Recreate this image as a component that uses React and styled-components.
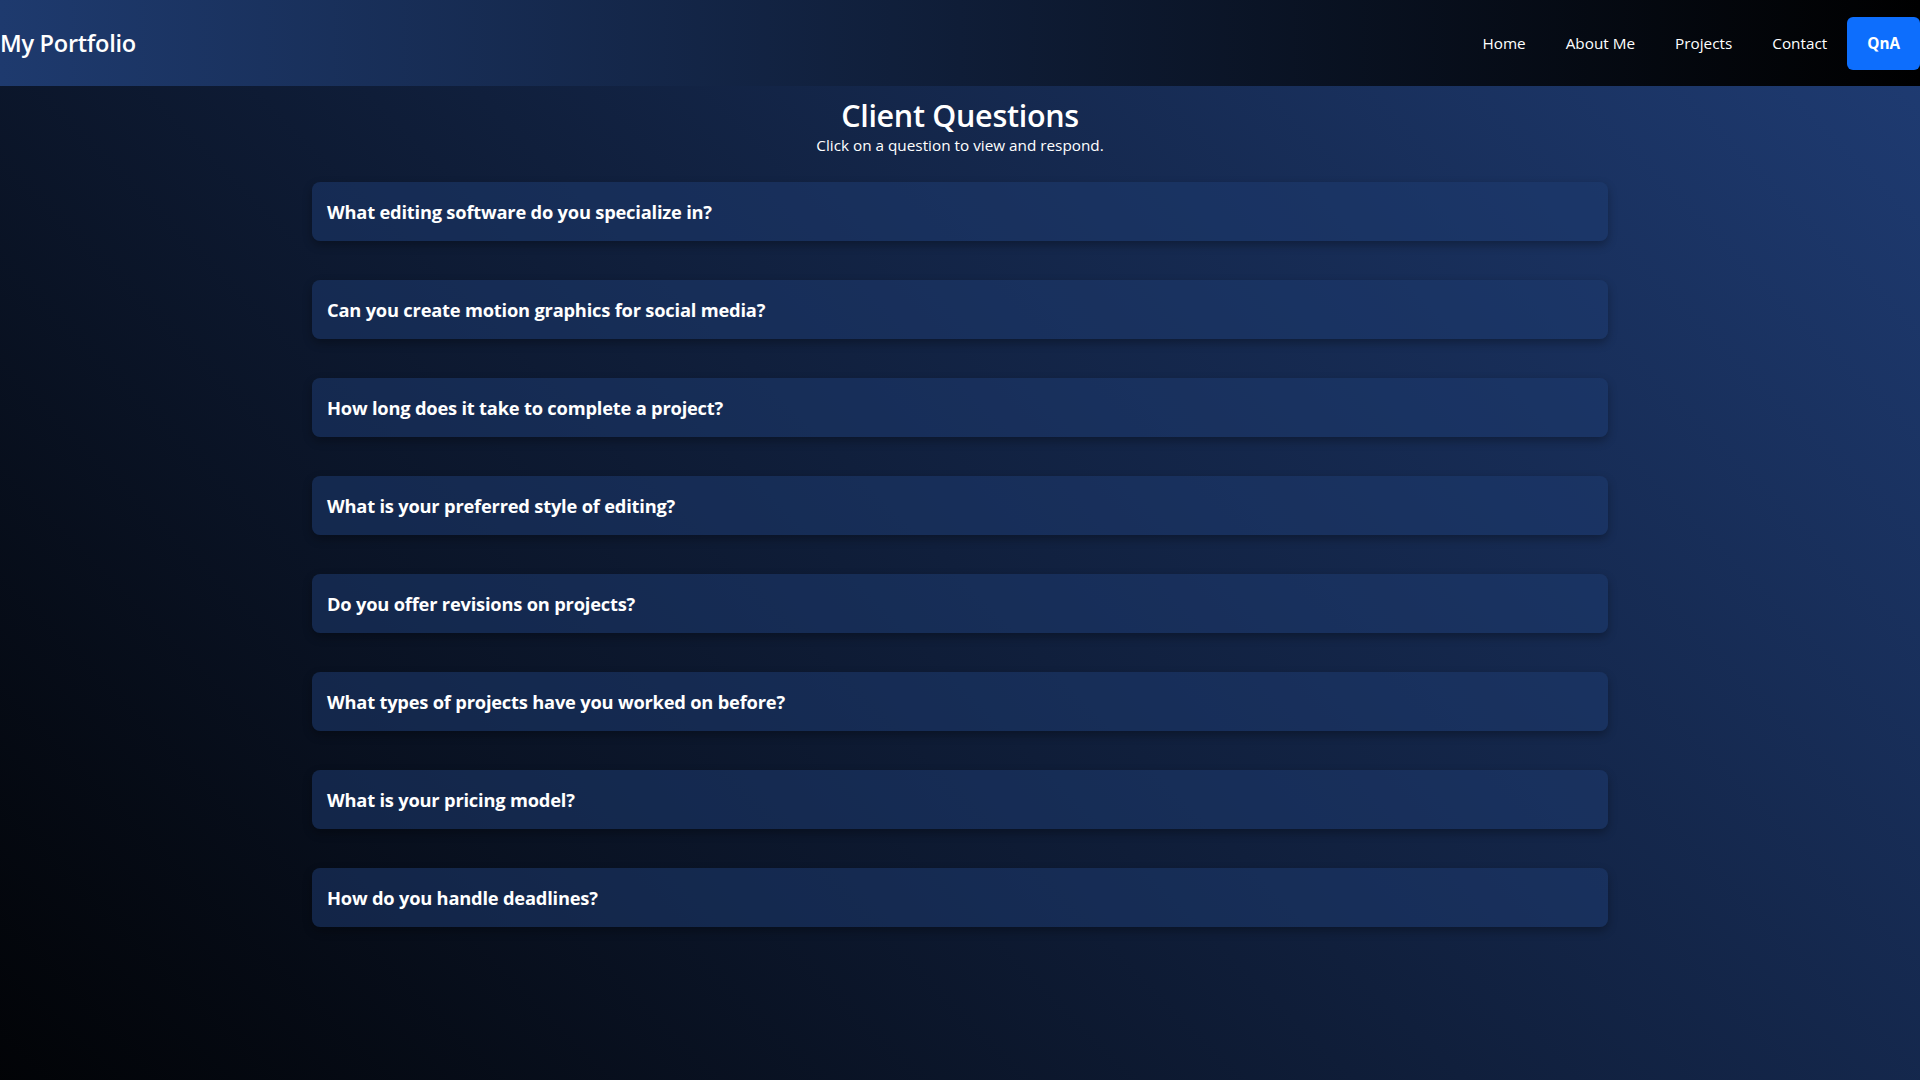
import React, { useState } from 'react'
import styled, { createGlobalStyle } from 'styled-components'

const GlobalStyle = createGlobalStyle`
  html, body, #root {
    height: 100%;
  }
  html {
    color-scheme: dark;
  }
  body {
    margin: 0;
    overflow: hidden;
    font-family: "Open Sans", "Noto Sans", sans-serif;
    color: #fff;
  }
`

const questions = [
  'What editing software do you specialize in?',
  'Can you create motion graphics for social media?',
  'How long does it take to complete a project?',
  'What is your preferred style of editing?',
  'Do you offer revisions on projects?',
  'What types of projects have you worked on before?',
  'What is your pricing model?',
  'How do you handle deadlines?',
]

const links = ['Home', 'About Me', 'Projects', 'Contact', 'QnA']

function App() {
  const [open, setOpen] = useState(null)

  return (
    <StScroller>
      <GlobalStyle />
      <StPage>
        <StHeader>
          <StLogo>My Portfolio</StLogo>
          <StNav>
            {links.map(name => (
              <StNavLink key={name} href="#" $active={name === 'QnA'}>{name}</StNavLink>
            ))}
          </StNav>
        </StHeader>

        <StMain>
          <StTitle>Client Questions</StTitle>
          <StSubtitle>Click on a question to view and respond.</StSubtitle>
          <StList>
            {questions.map((q, i) => (
              <StCard key={q} onClick={() => setOpen(pre => (pre === i ? null : i))}>
                <StQuestion>{q}</StQuestion>
              </StCard>
            ))}
          </StList>
        </StMain>
      </StPage>
    </StScroller>
  )
}
export default App

const StScroller = styled.div`
  height: 100vh;
  overflow-y: scroll;

  &::-webkit-scrollbar {
    width: 15px;
    background: #2b2b33;
  }
  &::-webkit-scrollbar-thumb {
    background: #4d4d57;
    border: 3px solid #2b2b33;
    border-radius: 8px;
  }
`

const StPage = styled.div`
  min-height: 100%;
  background: linear-gradient(45deg, #000 0%, #1f3c74 100%);
`

const StHeader = styled.header`
  display: flex;
  justify-content: space-between;
  align-items: center;
  height: 86px;
  box-sizing: border-box;
  background: linear-gradient(90deg, #1e3a6e 0%, #000 100%);
`

const StLogo = styled.div`
  font-size: 23.6px;
  font-weight: 600;
  letter-spacing: -0.3px;
`

const StNav = styled.nav`
  display: flex;
  align-items: center;
`

const StNavLink = styled.a`
  display: block;
  padding: 15px 20px;
  border-radius: 6px;
  font-size: 15.3px;
  line-height: 23px;
  color: #fff;
  text-decoration: none;
  font-weight: ${p => (p.$active ? 700 : 400)};
  background: ${p => (p.$active ? '#0d6efd' : 'transparent')};
`

const StMain = styled.main`
  display: flex;
  flex-direction: column;
  align-items: center;
  padding: 9px 0 328px;
`

const StTitle = styled.h2`
  margin: 0;
  font-size: 30.5px;
  font-weight: 600;
  line-height: 40px;
  letter-spacing: -0.3px;
`

const StSubtitle = styled.p`
  margin: 0;
  font-size: 15.3px;
  line-height: 20px;
`

const StList = styled.div`
  display: flex;
  flex-direction: column;
  gap: 39px;
  width: 1296px;
  margin-top: 27px;
`

const StCard = styled.div`
  padding: 17px 15px;
  border-radius: 8px;
  background: rgba(30, 58, 112, 0.55);
  box-shadow: 0 4px 10px rgba(0, 0, 0, 0.3);
  cursor: pointer;
`

const StQuestion = styled.h3`
  margin: 0;
  font-size: 18.3px;
  line-height: 25px;
  font-weight: 700;
  letter-spacing: -0.2px;
`
